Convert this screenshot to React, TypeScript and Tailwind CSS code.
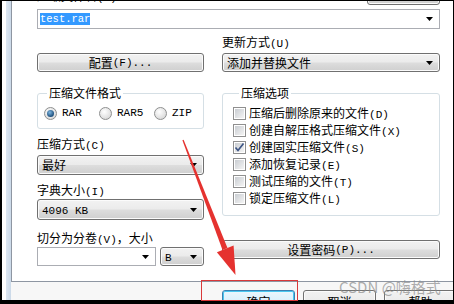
import type { ReactNode } from "react";

// latin runs use a narrow mono face, close to the half-width glyphs of the dialog font
function L({ children }: { children: ReactNode }) {
  return <span className="font-['Liberation_Mono',monospace] text-[11px]">{children}</span>;
}

function Caret() {
  return (
    <svg width="7" height="4" viewBox="0 0 7 4" className="shrink-0">
      <polygon points="0,0 7,0 3.5,4" fill="#000" />
    </svg>
  );
}

const buttonFace =
  "rounded-[3px] border border-[#707070] bg-[linear-gradient(#f2f2f2,#ebebeb_48%,#dddddd_52%,#cfcfcf)] shadow-[inset_0_0_0_1px_#fbfbfb]";

function Select({ children, className = "" }: { children: ReactNode; className?: string }) {
  return (
    <div className={`flex items-center justify-between pl-[4px] pr-[6px] ${buttonFace} ${className}`}>
      <span className="leading-[14px]">{children}</span>
      <Caret />
    </div>
  );
}

function Combo({ children, className = "" }: { children?: ReactNode; className?: string }) {
  return (
    <div className={`flex items-center justify-between border border-[#abadb3] bg-white pl-[1px] pr-[6px] ${className}`}>
      <div className="flex items-center">{children}</div>
      <Caret />
    </div>
  );
}

function Radio({ label, checked = false }: { label: string; checked?: boolean }) {
  return (
    <label className="flex items-center gap-[5px]">
      <span className="flex h-[13px] w-[13px] items-center justify-center rounded-full border border-[#8e8f8f] bg-[radial-gradient(circle_at_40%_35%,#ffffff,#cfcfcf)]">
        {checked ? (
          <span className="h-[7px] w-[7px] rounded-full bg-[radial-gradient(circle_at_40%_35%,#7fb6e0,#1d4f7c_70%)]" />
        ) : null}
      </span>
      <L>{label}</L>
    </label>
  );
}

function Check({ label, hotkey, checked = false }: { label: string; hotkey: string; checked?: boolean }) {
  return (
    <div className="flex h-[17px] items-center gap-[3px]">
      <span className="flex h-[13px] w-[13px] shrink-0 items-center justify-center border border-[#8f8f8f] bg-white">
        <span className="relative flex h-[9px] w-[9px] items-center justify-center bg-[linear-gradient(135deg,#c9cdd2,#f4f4f4)]">
          {checked ? (
            <svg width="11" height="11" viewBox="0 0 11 11" className="absolute">
              <path d="M1.5 5.5 L4 8.5 L9.5 1.5" fill="none" stroke="#3d5584" strokeWidth="1.7" />
            </svg>
          ) : null}
        </span>
      </span>
      <span className="leading-[14px]">
        {label}
        <L>({hotkey})</L>
      </span>
    </div>
  );
}

const checks = [
  { label: "压缩后删除原来的文件", hotkey: "D" },
  { label: "创建自解压格式压缩文件", hotkey: "X" },
  { label: "创建固实压缩文件", hotkey: "S", checked: true },
  { label: "添加恢复记录", hotkey: "E" },
  { label: "测试压缩的文件", hotkey: "T" },
  { label: "锁定压缩文件", hotkey: "L" },
];

export default function App() {
  return (
    <div className="relative flex h-[304px] w-[454px] overflow-hidden bg-black pb-[4px] pl-[2px] pr-[1px] pt-[1px] font-['Noto_Sans_CJK_SC',sans-serif] text-[12px] leading-[14px] text-black">
      {/* window frame */}
      <div className="w-[9px] shrink-0 bg-[linear-gradient(90deg,#ffffff_0,#ffffff_4px,#dde7f2_4px,#cbd9e8_9px)]" />

      <div className="flex min-w-0 flex-1 flex-col overflow-hidden bg-[#f7f7f7]">
        {/* tab page */}
        <div className="h-[281px] shrink-0 border-b border-l border-[#8e96a2] bg-white pl-[25px] pr-[13px]">
          <div className="-mt-[18px] flex h-[22px] items-end justify-between">
            <span>
              压缩文件名<L>(A)</L>
            </span>
            <div className={`h-[22px] w-[73px] ${buttonFace}`} />
          </div>

          <Combo className="mt-[4px] h-[20px]">
            <span className="ml-[1px] bg-[#3399ff] font-['Liberation_Mono',monospace] text-[10.5px] leading-[12px] text-white">
              test.rar
            </span>
          </Combo>

          <div className="mt-[6px] grid grid-cols-[167px_218px] gap-x-[18px]">
            <div className="flex flex-col justify-end">
              <div className={`flex h-[19px] items-center justify-center ${buttonFace}`}>
                配置<L>(F)...</L>
              </div>
            </div>
            <div className="flex flex-col">
              <span>
                更新方式<L>(U)</L>
              </span>
              <Select className="mt-[2px] h-[19px]">添加并替换文件</Select>
            </div>
          </div>

          <div className="grid grid-cols-[167px_218px] items-start gap-x-[18px]">
            <div className="flex flex-col">
              <fieldset className="mt-[14px] rounded-[3px] border border-[#d5dfe5] pb-[9px] pl-[6px] pt-[6px]">
                <legend className="ml-[3px] px-[2px] leading-[14px]">压缩文件格式</legend>
                <div className="grid h-[13px] grid-cols-[55px_55px_auto] items-center">
                  <Radio label="RAR" checked />
                  <Radio label="RAR5" />
                  <Radio label="ZIP" />
                </div>
              </fieldset>

              <span className="mt-[8px]">
                压缩方式<L>(C)</L>
              </span>
              <Select className="mt-[2px] h-[20px]">最好</Select>

              <span className="mt-[8px]">
                字典大小<L>(I)</L>
              </span>
              <Select className="h-[21px]">
                <L>4096 KB</L>
              </Select>

              <span className="mt-[11px]">
                切分为分卷<L>(V)</L>，大小
              </span>
              <div className="flex h-[19px] gap-[4px]">
                <Combo className="w-[119px]" />
                <Select className="w-[44px]">
                  <L>B</L>
                </Select>
              </div>
            </div>

            <div className="flex flex-col">
              <fieldset className="mt-[14px] rounded-[3px] border border-[#d5dfe5] pb-[8px] pl-[10px] pt-[5px]">
                <legend className="ml-[6px] px-[2px] leading-[14px]">压缩选项</legend>
                {checks.map((c) => (
                  <Check key={c.hotkey} label={c.label} hotkey={c.hotkey} checked={c.checked} />
                ))}
              </fieldset>
              <div className={`mt-[24px] flex h-[19px] items-center justify-center ${buttonFace}`}>
                设置密码<L>(P)...</L>
              </div>
            </div>
          </div>
        </div>

        {/* dialog buttons */}
        <div className="flex gap-[8px] pl-[211px] pt-[8px]">
          <div className="flex h-[23px] w-[73px] shrink-0 items-center justify-center rounded-[3px] border border-[#3c7fb1] bg-[linear-gradient(#eaf6fd,#d9f0fc_48%,#bee6fd_52%,#a7d9f5)] shadow-[inset_0_0_0_1px_#48c7f0]">
            确定
          </div>
          <div className={`flex h-[23px] w-[73px] shrink-0 items-center justify-center ${buttonFace}`}>取消</div>
          <div className={`flex h-[23px] w-[73px] shrink-0 items-center justify-center ${buttonFace}`}>帮助</div>
        </div>
      </div>

      {/* annotations drawn over the screenshot */}
      <div className="absolute left-[201px] top-[280px] h-[21px] w-[97px] border border-[#d9383a]" />
      <div className="absolute left-[339px] top-[278px] text-[15px] leading-[18px] text-[#8a8a8a]/70">
        CSDN @嗨格式
      </div>
      <svg className="pointer-events-none absolute left-0 top-0" width="454" height="304" viewBox="0 0 454 304">
        <polygon points="183.6,139.7 227.5,248 222.5,250 182.4,140.3" fill="#e5322f" />
        <polygon points="233.6,245.6 235.5,275 216.9,252.2" fill="#e5322f" />
      </svg>
    </div>
  );
}
